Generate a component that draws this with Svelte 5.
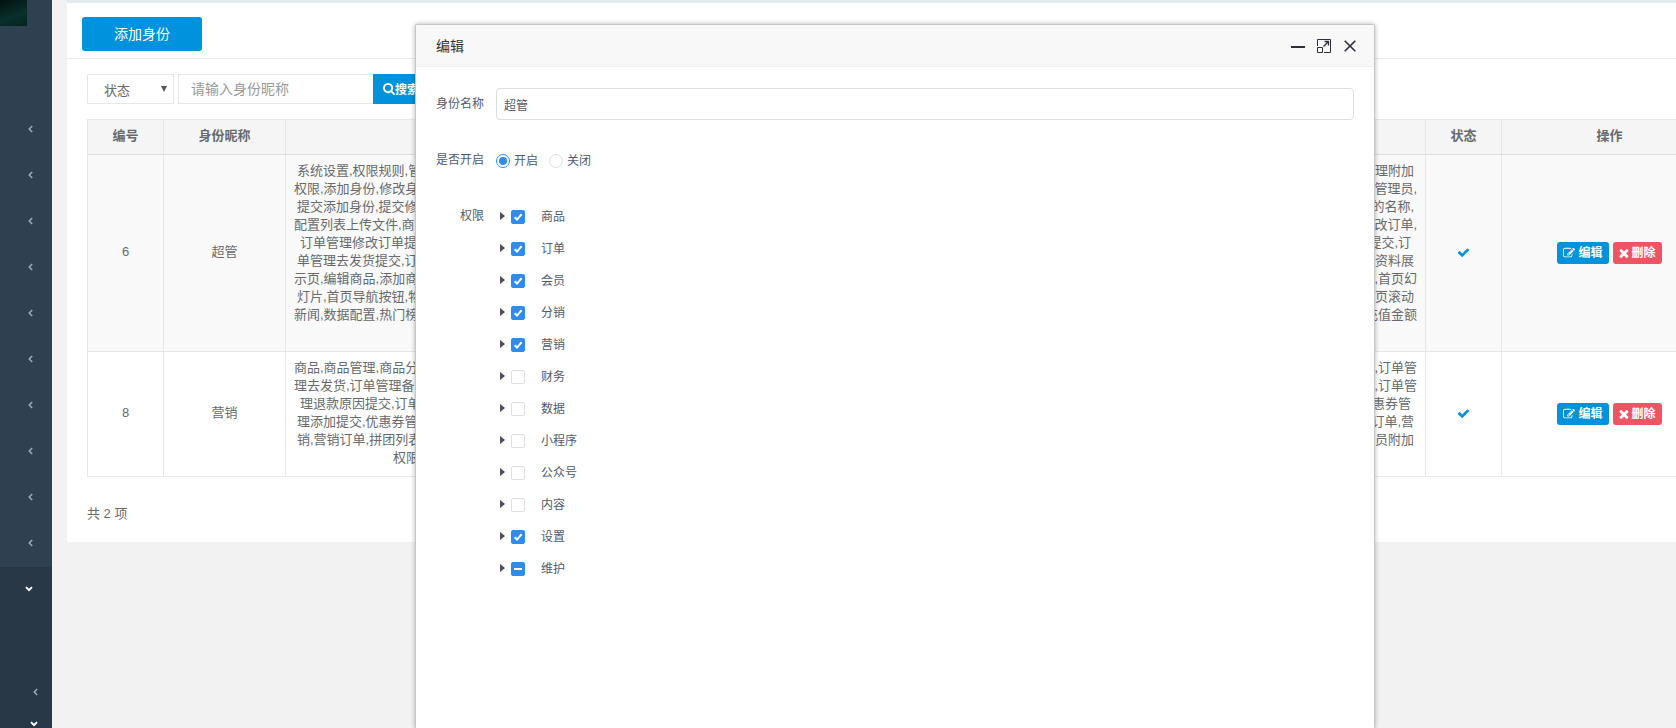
<script>
  const STEP = 3;
  const rows = [
    {
      id: 6,
      name: '超管',
      lines: [
        [1, '系统设置,权限规则,管', '理附加'],
        [0, '权限,添加身份,修改身', '管理员,'],
        [1, '提交添加身份,提交修', '的名称,'],
        [0, '配置列表上传文件,商', '改订单,'],
        [2, '订单管理修改订单提', '提交,订'],
        [1, '单管理去发货提交,订', '资料展'],
        [0, '示页,编辑商品,添加商', ',首页幻'],
        [1, '灯片,首页导航按钮,物', '首页滚动'],
        [0, '新闻,数据配置,热门榜', '充值金额'],
        [0, '', '']
      ]
    },
    {
      id: 8,
      name: '营销',
      lines: [
        [0, '商品,商品管理,商品分', ',订单管'],
        [0, '理去发货,订单管理备', ',订单管'],
        [2, '理退款原因提交,订单', '惠券管'],
        [1, '理添加提交,优惠券管', '订单,营'],
        [1, '销,营销订单,拼团列表', '会员附加'],
        [33, '权限', '']
      ]
    }
  ];

  let tree = $state([
    { label: '商品', checked: true },
    { label: '订单', checked: true },
    { label: '会员', checked: true },
    { label: '分销', checked: true },
    { label: '营销', checked: true },
    { label: '财务', checked: false },
    { label: '数据', checked: false },
    { label: '小程序', checked: false },
    { label: '公众号', checked: false },
    { label: '内容', checked: false },
    { label: '设置', checked: true },
    { label: '维护', checked: false, partial: true }
  ]);
  let roleName = $state('超管');
  let enabled = $state('on');

  const paths = {
    check: 'M1671 566q0 40-28 68l-724 724-136 136q-28 28-68 28t-68-28l-136-136-362-362q-28-28-28-68t28-68l136-136q28-28 68-28t68 28l294 295 656-657q28-28 68-28t68 28l136 136q28 28 28 68z',
    times: 'M1490 1322q0 40-28 68l-136 136q-28 28-68 28t-68-28l-294-294-294 294q-28 28-68 28t-68-28l-136-136q-28-28-28-68t28-68l294-294-294-294q-28-28-28-68t28-68l136-136q28-28 68-28t68 28l294 294 294-294q28-28 68-28t68 28l136 136q28 28 28 68t-28 68l-294 294 294 294q28 28 28 68z',
    search: 'M1216 832q0-185-131.5-316.5t-316.5-131.5-316.5 131.5-131.5 316.5 131.5 316.5 316.5 131.5 316.5-131.5 131.5-316.5zm512 832q0 52-38 90t-90 38q-54 0-90-38l-343-342q-179 124-399 124-143 0-273.5-55.5t-225-150-150-225-55.5-273.5 55.5-273.5 150-225 225-150 273.5-55.5 273.5 55.5 225 150 150 225 55.5 273.5q0 220-124 399l343 343q37 37 37 90z',
    edit: 'M888 1184l116-116-152-152-116 116v56h96v96h56zm440-720q-16-16-33 1l-350 350q-17 17-1 33t33-1l350-350q17-17 1-33zm80 594v190q0 119-84.5 203.5t-203.5 84.5h-832q-119 0-203.5-84.5t-84.5-203.5v-832q0-119 84.5-203.5t203.5-84.5h832q63 0 117 25 15 7 18 23 3 17-9 29l-49 49q-14 14-32 8-23-6-45-6h-832q-66 0-113 47t-47 113v832q0 66 47 113t113 47h832q66 0 113-47t47-113v-126q0-13 9-22l64-64q15-15 35-7t20 29zm-96-738l288 288-672 672h-288v-288zm444 132l-92 92-288-288 92-92q28-28 68-28t68 28l152 152q28 28 28 68t-28 68z'
  };
</script>

{#snippet chevron(down)}
  {#if down}
    <svg class="chev down" width="8" height="6" viewBox="0 0 8 6"><path d="M1 1.2 4 4.2 7 1.2" /></svg>
  {:else}
    <svg class="chev" width="5" height="8" viewBox="0 0 5 8"><path d="M4.2 1 1.2 4 4.2 7" /></svg>
  {/if}
{/snippet}

<div class="app">
  <nav class="sidebar">
    <div class="avatar"></div>
    <div class="menu">
      {#each Array(10) as _}
        <div class="item">{@render chevron(false)}</div>
      {/each}
    </div>
    <div class="active">
      <div class="item">{@render chevron(true)}</div>
      <div class="sub">
        <div class="subitem">{@render chevron(false)}</div>
        <div class="subitem">{@render chevron(true)}</div>
      </div>
    </div>
  </nav>

  <main>
    <div class="page">
      <section class="panel">
        <header class="panel-head">
          <button class="add" type="button">添加身份</button>
        </header>
        <div class="panel-body">
          <form class="filter" onsubmit={(e) => e.preventDefault()}>
            <div class="select">
              <select aria-label="状态"><option>状态</option></select>
              <svg width="6" height="6" viewBox="0 0 6 6"><path d="M0 0h6L3 6z" /></svg>
            </div>
            <div class="group">
              <input type="text" placeholder="请输入身份昵称" aria-label="身份昵称" />
              <button type="submit">
                <svg width="12" height="12" viewBox="64 128 1664 1664"><path d={paths.search} /></svg>搜索
              </button>
            </div>
          </form>

          <table>
            <colgroup><col class="narrow" /><col class="name" /><col /><col class="narrow" /><col class="ops" /></colgroup>
            <thead>
              <tr><th>编号</th><th>身份昵称</th><th></th><th>状态</th><th>操作</th></tr>
            </thead>
            <tbody>
              {#each rows as row}
                <tr>
                  <td>{row.id}</td>
                  <td>{row.name}</td>
                  <td>
                    {#each row.lines as [indent, start, end]}
                      <div class="line" style="padding: 0 {indent * STEP}px"><span>{start}</span><span>{end}</span></div>
                    {/each}
                  </td>
                  <td><svg class="ok" width="13" height="13" viewBox="0 0 1792 1792"><path d={paths.check} /></svg></td>
                  <td>
                    <div class="actions">
                      <button class="edit" type="button"><svg width="12" height="12" viewBox="0 64 1792 1664"><path d={paths.edit} /></svg>编辑</button>
                      <button class="del" type="button"><svg width="10" height="10" viewBox="240 240 1312 1312"><path d={paths.times} /></svg>删除</button>
                    </div>
                  </td>
                </tr>
              {/each}
            </tbody>
          </table>
          <p class="total">共 2 项</p>
        </div>
      </section>
    </div>
  </main>

  <div class="modal" role="dialog" aria-labelledby="dialog-title">
    <header class="modal-head">
      <h2 id="dialog-title">编辑</h2>
      <div class="tools">
        <button type="button" aria-label="最小化"><svg width="14" height="14" viewBox="0 0 14 14"><path d="M0 8h14" stroke-width="2" /></svg></button>
        <button type="button" aria-label="最大化">
          <svg width="14" height="14" viewBox="0 0 14 14">
            <path d="M.5 7V.5h13v13H7M.5 8.5h5v5h-5z" stroke-width="1" />
            <path d="M6.5 7.5 11 3M7.5 2.5h4v4" stroke-width="1.3" />
          </svg>
        </button>
        <button type="button" aria-label="关闭"><svg width="14" height="14" viewBox="0 0 14 14"><path d="m1.7 1.7 10.6 10.6M12.3 1.7 1.7 12.3" stroke-width="1.6" /></svg></button>
      </div>
    </header>
    <form class="form">
      <div class="field">
        <label class="caption" for="role">身份名称</label>
        <input class="text" id="role" type="text" bind:value={roleName} />
      </div>
      <div class="field">
        <span class="caption" id="state-caption">是否开启</span>
        <div class="radios" role="radiogroup" aria-labelledby="state-caption">
          <label><input type="radio" name="state" value="on" bind:group={enabled} />开启</label>
          <label><input type="radio" name="state" value="off" bind:group={enabled} />关闭</label>
        </div>
      </div>
      <div class="field">
        <span class="caption">权限</span>
        <ul class="tree">
          {#each tree as node}
            <li>
              <svg width="5" height="10" viewBox="0 0 5 10"><path d="M0 0l5 4-5 4z" /></svg>
              <label><input type="checkbox" bind:checked={node.checked} indeterminate={node.partial ?? false} />{node.label}</label>
            </li>
          {/each}
        </ul>
      </div>
    </form>
  </div>
</div>

<style>
  :global(body) { background: #f2f2f2; }
  .app, .app * { box-sizing: border-box; }
  .app {
    position: relative;
    display: flex;
    height: 100vh;
    overflow: hidden;
    font: 13px/18px "Liberation Sans", "Noto Sans CJK SC", sans-serif;
    color: #676a6c;
  }
  button, input, select { font-family: inherit; margin: 0; }
  button { cursor: pointer; border: 0; }

  .sidebar { flex: none; display: flex; flex-direction: column; width: 52px; background: #2f4050; }
  .avatar { flex: none; width: 27px; height: 26px; margin-bottom: 80px; background: linear-gradient(160deg, #03110f, #08302c 60%, #06231f); }
  .menu { flex: none; padding-bottom: 1px; }
  .item { display: flex; align-items: center; justify-content: flex-end; height: 46px; padding-right: 19px; }
  .active { flex: 1 0 auto; background: #293846; }
  .active .item { height: 44px; }
  .sub { padding-top: 65px; }
  .subitem { display: flex; align-items: center; justify-content: flex-end; height: 32px; padding-right: 14px; }
  .chev { fill: none; stroke: #9db0c6; stroke-width: 1.4; }
  .down { stroke: #fff; stroke-width: 1.9; }

  main { flex: 1; min-width: 0; padding-left: 15px; overflow: hidden; }
  .page { margin-right: -62px; }
  .panel { background: #fff; border-top: 3px solid #e7eaec; }
  .panel-head { padding: 14px 15px 7px; border-bottom: 1px solid #e7eaec; }
  .add { display: block; width: 120px; height: 34px; padding: 0 0 2px; border-radius: 3px; background: #0092dc; color: #fff; font-size: 14px; }
  .panel-body { padding: 15px 20px 19px; }
  .filter { display: flex; gap: 4px; margin-bottom: 15px; }
  .select { position: relative; width: 87px; }
  .select select {
    width: 100%; height: 30px; padding: 2px 16px 0; border: 1px solid #e5e6e7; border-radius: 1px;
    background: #fff; appearance: none; font-size: 13px; color: inherit;
  }
  .select svg { position: absolute; right: 7px; top: 12px; fill: #555; pointer-events: none; }
  .group { display: flex; }
  .group input { width: 195px; height: 30px; padding: 0 12px; border: 1px solid #e5e6e7; border-right: 0; border-radius: 1px 0 0 1px; font-size: 14px; color: inherit; }
  .group input::placeholder { color: #999; }
  .group button { display: flex; align-items: center; height: 30px; padding: 0 10px 1px; background: #0092dc; color: #fff; font-size: 12px; font-weight: 700; }
  button svg { flex: none; fill: currentColor; }

  table { width: 100%; table-layout: fixed; border-collapse: collapse; text-align: center; }
  .narrow { width: 76px; }
  .name { width: 122px; }
  .ops { width: 216px; }
  th, td { padding: 7px 8px 9px; border: 1px solid #e7e7e7; line-height: 18px; }
  th { background: #f5f5f6; border-bottom-color: #ddd; }
  tbody tr:nth-child(odd) { background: #f9f9f9; }
  .line { display: flex; justify-content: space-between; height: 18px; white-space: nowrap; }
  .ok { display: block; margin: 0 auto; fill: #0092dc; }
  .actions { display: flex; justify-content: center; gap: 4px; padding-top: 2px; }
  .actions button { display: flex; align-items: center; gap: 3px; height: 22px; padding: 0 6px; border-radius: 3px; color: #fff; font-size: 12px; line-height: 20px; font-weight: 700; }
  .edit { background: #0092dc; }
  .del { background: #ed5565; }
  .total { margin: 28px 0 0; }

  .modal {
    position: absolute; top: 24px; right: 301px; bottom: 0; left: 415px;
    border: 1px solid #c6c6c6; border-bottom: 0; border-radius: 2px 2px 0 0;
    background: #fff; box-shadow: 0 0 5px rgba(0, 0, 0, 0.3);
  }
  .modal-head { display: flex; align-items: center; justify-content: space-between; height: 42px; padding: 0 17px 0 20px; background: #f8f8f8; border-bottom: 1px solid #eee; }
  h2 { margin: 0; font-size: 14px; font-weight: 400; color: #333; }
  .tools { display: flex; gap: 12px; padding-top: 1px; }
  .tools button { display: flex; padding: 0; background: none; }
  .tools svg { fill: none; stroke: #2e2d3c; }

  .form { display: flex; flex-direction: column; gap: 24px; padding: 21px 20px; font-size: 12px; color: #515a6e; }
  .field { display: flex; gap: 12px; }
  .caption { flex: none; width: 48px; line-height: 32px; text-align: right; }
  .text { flex: 1; min-width: 0; height: 32px; padding: 0 7px; border: 1px solid #dcdee2; border-radius: 4px; font-size: 12px; color: #515a6e; }
  .radios { display: flex; gap: 11px; height: 32px; padding-top: 1px; }
  .radios label { display: flex; align-items: center; gap: 4px; height: 32px; }
  .tree { margin: 0; padding: 1px 0 0 4px; list-style: none; }
  .tree li { display: flex; align-items: center; gap: 6px; height: 32px; }
  .tree li > svg { fill: #464c5b; }
  .tree label { display: flex; align-items: center; gap: 16px; }
  input[type="radio"], input[type="checkbox"] { position: relative; flex: none; width: 14px; height: 14px; border: 1px solid #dcdee2; background: #fff; appearance: none; }
  input[type="radio"] { border-radius: 50%; }
  input[type="radio"]:checked { border-color: #2d8cf0; }
  input[type="radio"]:checked::after { content: ""; position: absolute; inset: 2px; border-radius: 50%; background: #2d8cf0; }
  input[type="checkbox"] { border-radius: 2px; }
  input[type="checkbox"]:checked, input[type="checkbox"]:indeterminate { border-color: #2d8cf0; background: #2d8cf0; }
  input[type="checkbox"]:checked {
    background-image: url("data:image/svg+xml,%3Csvg xmlns='http://www.w3.org/2000/svg' viewBox='0 0 12 12'%3E%3Cpath d='M2.6 6.3 5 8.6 9.6 3.2' fill='none' stroke='%23fff' stroke-width='2'/%3E%3C/svg%3E");
  }
  input[type="checkbox"]:indeterminate::after { content: ""; position: absolute; top: 5px; left: 2px; width: 8px; height: 2px; background: #fff; }
</style>
